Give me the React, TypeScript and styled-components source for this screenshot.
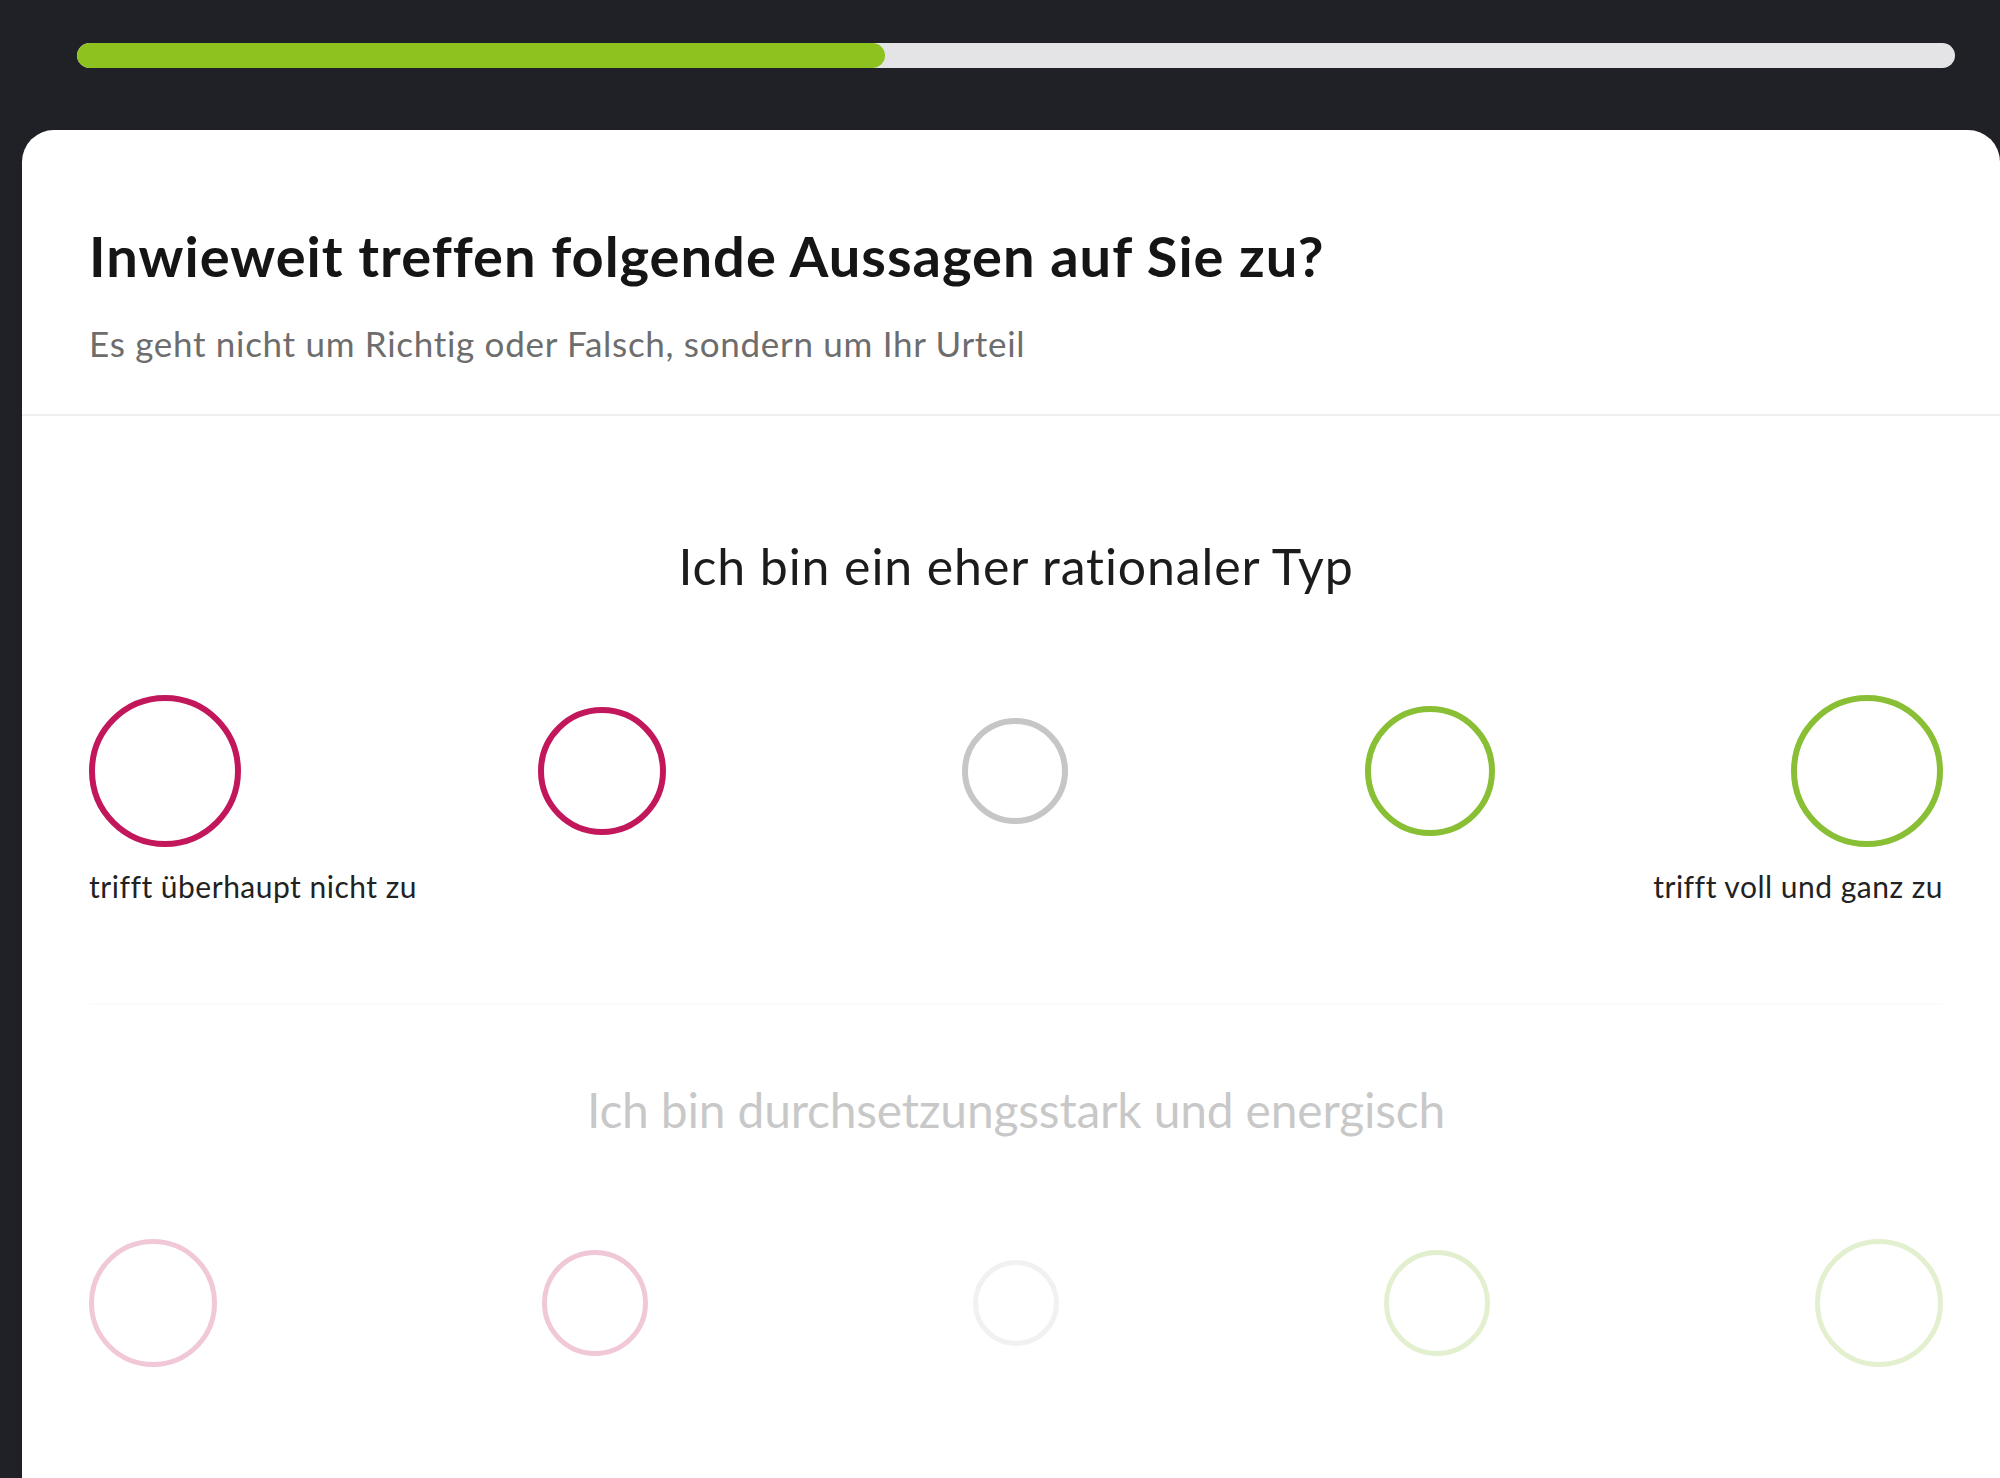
import { FC } from 'react';
import styled, { createGlobalStyle } from 'styled-components';

const GlobalStyle = createGlobalStyle`
    html, body {
        margin: 0;
        padding: 0;
        background: #202127;
        font-family: Lato, "Open Sans", Arial, sans-serif;
    }
    * { box-sizing: border-box; }
`;

const Page = styled.div`
    width: 2000px;
    height: 1478px;
    overflow: hidden;
    background: #202127;
    display: flex;
    flex-direction: column;
`;

const ProgressTrack = styled.div`
    margin: 43px 45px 0 77px;
    height: 25px;
    border-radius: 13px;
    background: #e4e4e6;
    overflow: hidden;
    flex-shrink: 0;
`;

const ProgressFill = styled.div`
    height: 100%;
    border-radius: 13px;
    background: #8dc21f;
`;

const Card = styled.div`
    margin: 62px 0 0 22px;
    flex: 1;
    background: #fff;
    border-radius: 32px 32px 0 0;
`;

const Header = styled.div`
    padding: 92px 57px 50px 67px;
    border-bottom: 2px solid #efefef;
`;

const Title = styled.h1`
    margin: 0;
    font-size: 56px;
    line-height: 1.2;
    font-weight: 700;
    color: #151515;
    letter-spacing: 1px;
`;

const Subtitle = styled.p`
    margin: 33px 0 0;
    font-size: 35px;
    line-height: 1.2;
    color: #6d6d6d;
    letter-spacing: 0.7px;
`;

const Body = styled.div`
    padding: 45px 57px 0 67px;
`;

const Statement = styled.section<{ $faded?: boolean }>`
    padding: 76px 0 100px;
    opacity: ${p => (p.$faded ? 0.24 : 1)};
    & + & {
        border-top: 2px solid #efefef;
    }
`;

const Question = styled.h2<{ $active?: boolean }>`
    margin: 0;
    text-align: center;
    font-size: ${p => (p.$active ? 50 : 48)}px;
    letter-spacing: ${p => (p.$active ? 0.9 : -0.2)}px;
    line-height: 58px;
    font-weight: 400;
    color: #1c1c1c;
`;

const Scale = styled.div`
    margin-top: 100px;
    display: flex;
    justify-content: space-between;
    align-items: center;
`;

const Option = styled.button<{ $size: number; $color: string; $stroke: number }>`
    width: ${p => p.$size}px;
    height: ${p => p.$size}px;
    border-radius: 50%;
    border: ${p => p.$stroke}px solid ${p => p.$color};
    background: transparent;
    padding: 0;
    cursor: pointer;
    flex-shrink: 0;
`;

const Labels = styled.div`
    margin-top: 22px;
    display: flex;
    justify-content: space-between;
    font-size: 30px;
    letter-spacing: 0.5px;
    line-height: 34px;
    color: #222;
`;

const RED = '#c2185b';
const GREY = '#c6c6c6';
const GREEN = '#88bf35';
const COLORS = [RED, RED, GREY, GREEN, GREEN];

const ACTIVE_SIZES = [152, 128, 106, 130, 152];
const IDLE_SIZES = [128, 106, 86, 106, 128];

interface StatementProps {
    text: string;
    active?: boolean;
}

const StatementBlock: FC<StatementProps> = ({ text, active }) => {
    const sizes = active ? ACTIVE_SIZES : IDLE_SIZES;
    return (
        <Statement $faded={!active}>
            <Question $active={active}>{text}</Question>
            <Scale>
                {sizes.map((s, i) => (
                    <Option key={i} $size={s} $color={COLORS[i]} $stroke={active ? 6 : 5} aria-label={`Option ${i + 1}`} />
                ))}
            </Scale>
            {active && (
                <Labels>
                    <span>trifft überhaupt nicht zu</span>
                    <span>trifft voll und ganz zu</span>
                </Labels>
            )}
        </Statement>
    );
};

export default function App() {
    const progress = 43;
    return (
        <Page>
            <GlobalStyle />
            <ProgressTrack>
                <ProgressFill style={{ width: `${progress}%` }} />
            </ProgressTrack>
            <Card>
                <Header>
                    <Title>Inwieweit treffen folgende Aussagen auf Sie zu?</Title>
                    <Subtitle>Es geht nicht um Richtig oder Falsch, sondern um Ihr Urteil</Subtitle>
                </Header>
                <Body>
                    <StatementBlock text="Ich bin ein eher rationaler Typ" active />
                    <StatementBlock text="Ich bin durchsetzungsstark und energisch" />
                </Body>
            </Card>
        </Page>
    );
}
